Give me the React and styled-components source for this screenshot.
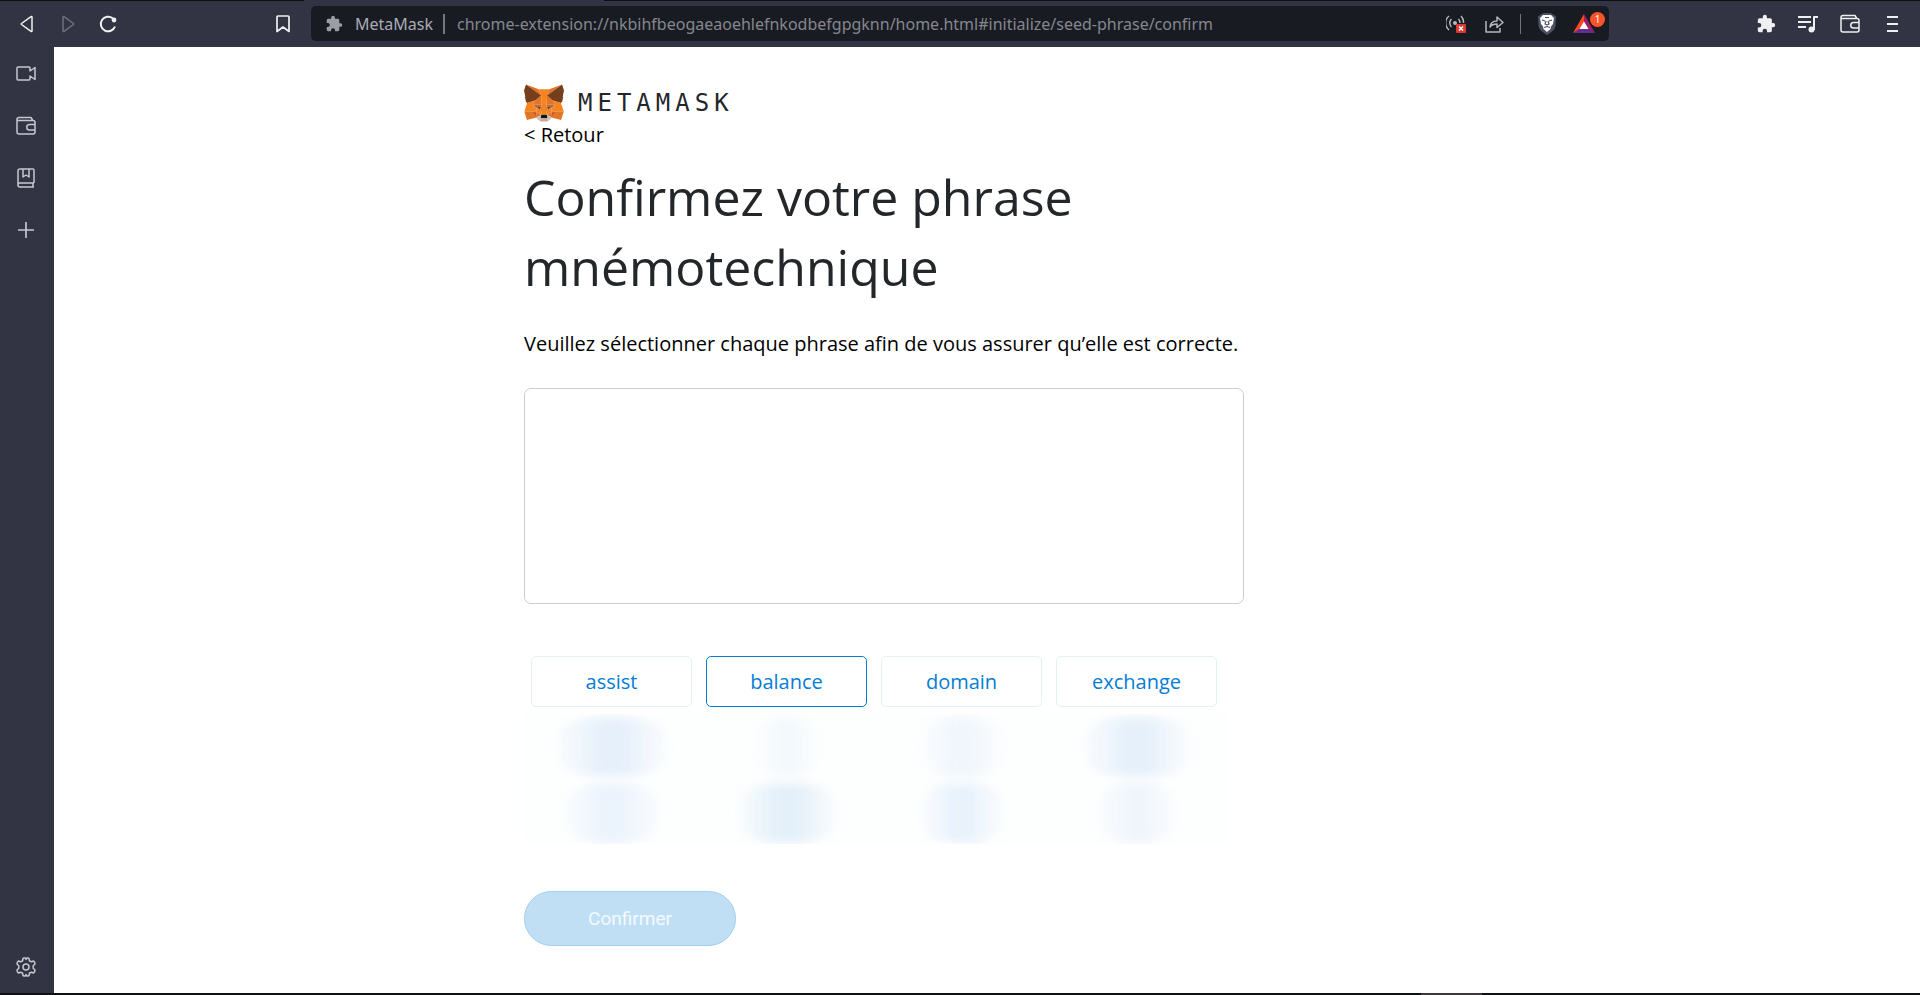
import React from 'react'
import styled, { createGlobalStyle } from 'styled-components'

const GlobalStyle = createGlobalStyle`
  * {
    box-sizing: border-box;
  }
  body {
    margin: 0;
    background: #ffffff;
  }
  button {
    font-family: inherit;
    cursor: pointer;
  }
`

const FOX_SHAPES = [
  ['#e17726', 'M33 1L19.8 10.7L22.3 5Z'],
  ['#e27625', 'M2.7 1L15.7 10.8L13.4 5ZM28.2 23.5L24.7 28.9L32.2 30.9L34.4 23.7ZM1.3 23.7L3.4 30.9L10.9 28.9L7.4 23.5ZM10.5 14.5L8.4 17.7L15.8 18L15.6 10ZM25.2 14.5L20 9.9L19.8 18L27.2 17.7ZM10.9 28.9L15.4 26.7L11.5 23.7ZM20.3 26.7L24.7 28.9L24.1 23.7Z'],
  ['#d5bfb2', 'M24.7 28.9L20.3 26.7L20.6 29.6L20.6 30.8ZM10.9 28.9L15 30.8L15 29.6L15.4 26.7Z'],
  ['#233447', 'M15.1 21.8L11.4 20.7L14 19.5ZM20.5 21.8L21.6 19.5L24.2 20.7Z'],
  ['#cc6228', 'M10.9 28.9L11.5 23.5L7.4 23.7ZM24.1 23.5L24.7 28.9L28.2 23.7ZM27.2 17.7L19.8 18L20.5 21.8L21.6 19.5L24.2 20.7ZM11.4 20.7L14 19.5L15.1 21.8L15.8 18L8.4 17.7Z'],
  ['#e27525', 'M8.4 17.7L11.5 23.7L11.4 20.7ZM24.2 20.7L24.1 23.7L27.2 17.7ZM15.8 18L15.1 21.8L16 26.3L16.2 20.4ZM19.8 18L19.5 20.4L19.6 26.3L20.5 21.8Z'],
  ['#f5841f', 'M20.5 21.8L19.6 26.3L20.3 26.7L24.1 23.7L24.2 20.7ZM11.4 20.7L11.5 23.7L15.4 26.7L16 26.3L15.1 21.8Z'],
  ['#c0ac9d', 'M20.6 30.8L20.6 29.6L20.3 29.3H15.3L15 29.6L15 30.8L10.9 28.9L12.3 30.1L15.3 32.1H20.3L23.3 30.1L24.7 28.9Z'],
  ['#161616', 'M20.3 26.7L19.6 26.3H16L15.4 26.7L15 29.6L15.3 29.3H20.3L20.6 29.6Z'],
  ['#763e1a', 'M33.5 11.4L34.6 6L33 1L20.3 10.4L25.2 14.5L32 16.5L33.6 14.7L32.9 14.3L34 13.3L33.2 12.7L34.2 11.9ZM1 6L2.1 11.4L1.4 11.9L2.5 12.7L1.7 13.3L2.7 14.3L2.1 14.7L3.6 16.5L10.5 14.5L15.4 10.4L2.7 1Z'],
  ['#f5841f', 'M32 16.5L25.2 14.5L27.2 17.7L24.1 23.7L28.2 23.7H34.4ZM10.5 14.5L3.6 16.5L1.3 23.7H7.4L11.5 23.7L8.4 17.7ZM19.8 18L20.3 10.4L22.3 5H13.4L15.4 10.4L15.8 18L16 20.4L16 26.3H19.6L19.7 20.4Z']
]

function Fox() {
  return (
    <svg width="40" height="38" viewBox="1 1 33.6 31.2" aria-hidden="true">
      {FOX_SHAPES.map(([fill, d]) => (
        <path key={d} fill={fill} d={d} />
      ))}
    </svg>
  )
}

const PUZZLE =
  'M20.5 11H19V7c0-1.100-.9-2-2-2h-4V3.500a2.500 2.500 0 0 0-5 0V5H4c-1.100 0-2 .9-2 2v3.800h1.500a2.700 2.700 0 0 1 0 5.400H2V20c0 1.100.9 2 2 2h3.800v-1.500a2.700 2.700 0 0 1 5.400 0V22H17c1.100 0 2-.9 2-2v-4h1.500a2.500 2.500 0 0 0 0-5z'

function Puzzle({ size }) {
  return (
    <svg width={size} height={size} viewBox="1 0 23 23" fill="currentColor" aria-hidden="true">
      <path d={PUZZLE} />
    </svg>
  )
}

function Line({ width = 20, height = 20, children }) {
  return (
    <svg
      width={width}
      height={height}
      viewBox={`0 0 ${width} ${height}`}
      fill="none"
      stroke="currentColor"
      strokeWidth="1.5"
      strokeLinejoin="round"
      aria-hidden="true"
    >
      {children}
    </svg>
  )
}

function Wallet() {
  return (
    <Line>
      <path d="M1 3.500C1 2 1.500 1.500 3 1.500h12l1.500 2.500M1 3.500c0 .5.500 1 1.500 1H17c1.300 0 2 .7 2 2V16c0 1.300-.7 2-2 2H3c-1.300 0-2-.7-2-2z" />
      <path d="M19 8.500h-5.500a2.700 2.700 0 0 0 0 5.500H19" />
    </Line>
  )
}

function Toolbar() {
  return (
    <ToolbarFrame>
      <NavGroup>
        <IconButton aria-label="Back">
          <Line>
            <path d="M14 3v14a.6.6 0 0 1-1 .4L3.500 10.500a.7.7 0 0 1 0-1L13 2.600a.6.6 0 0 1 1 .4z" />
          </Line>
        </IconButton>
        <IconButton aria-label="Forward" $dim>
          <Line>
            <path d="M5 3v14a.6.6 0 0 0 1 .4l9.500-6.900a.7.7 0 0 0 0-1L6 2.600a.6.6 0 0 0-1 .4z" />
          </Line>
        </IconButton>
        <IconButton aria-label="Reload">
          <Line>
            <path strokeWidth="2" d="M14.700 4.300A7.300 7.300 0 1 0 17 12.500" />
            <circle cx="16" cy="6" r="2.400" fill="currentColor" stroke="none" />
          </Line>
        </IconButton>
        <BookmarkButton aria-label="Bookmark">
          <Line>
            <path strokeWidth="1.700" d="M4 3c0-.6.400-1 1-1h10c.6 0 1 .4 1 1v14.500L10 13l-6 4.500z" />
          </Line>
        </BookmarkButton>
      </NavGroup>
      <AddressBar>
        <Puzzle size={17} />
        <SiteName>MetaMask</SiteName>
        <Url>chrome-extension://nkbihfbeogaeaoehlefnkodbefgpgknn/home.html#initialize/seed-phrase/confirm</Url>
        <BarIcons>
          <IconButton aria-label="Connections blocked" $muted>
            <Line>
              <circle cx="9" cy="9" r="2" fill="currentColor" stroke="none" />
              <path d="M5.500 13a5.500 5.500 0 0 1 0-8M12.500 5a5.500 5.500 0 0 1 1.500 4M3 16A9 9 0 0 1 3 2M15 2a9 9 0 0 1 2.500 7" />
              <rect x="10" y="10" width="10" height="9" rx="1" fill="#dc3a30" stroke="none" />
              <path stroke="#ffffff" d="M13 12.500l4 4m0-4l-4 4" />
            </Line>
          </IconButton>
          <IconButton aria-label="Share" $muted>
            <Line>
              <path d="M2 7v11h14v-4M6 13c.5-4 2.500-6 7-6V3l6 5.500-6 5V10c-3.500 0-5.500.8-7 3z" />
            </Line>
          </IconButton>
          <Divider />
          <IconButton aria-label="Brave Shields">
            <Line width={20} height={24}>
              <path fill="#4c5063" stroke="none" d="M4 2.500L6.500 1h7L16 2.500l3 2-.5 9.500c-.3 3-3 5.500-8.500 9-5.500-3.500-8.200-6-8.500-9L1 4.500z" />
              <path fill="#ffffff" stroke="none" d="M6 3h8l3 3-1 6-2 2.500-.5 2.500-3.500 3-3.500-3-.5-2.500L4 12 3 6z" />
              <path stroke="#4c5063" strokeWidth="1.200" d="M5 8l3 1M15 8l-3 1M9 9l-1 3 2 1 2-1-1-3M7 15.500l3-1 3 1M8 5.500h4" />
            </Line>
          </IconButton>
          <RewardsButton aria-label="Brave Rewards, 1 notification">
            <Line width={22} height={19}>
              <path fill="#ff4724" stroke="none" d="M11 0L0 19l11-6z" />
              <path fill="#9e1f63" stroke="none" d="M11 0l11 19-11-6z" />
              <path fill="#662d91" stroke="none" d="M0 19h22l-7-4.500H7z" />
              <path fill="#ffffff" stroke="none" d="M11 7.500l4.500 7.500h-9z" />
            </Line>
            <Badge>1</Badge>
          </RewardsButton>
        </BarIcons>
      </AddressBar>
      <ToolGroup>
        <IconButton aria-label="Extensions">
          <Puzzle size={19} />
        </IconButton>
        <IconButton aria-label="Media">
          <Line>
            <path strokeWidth="2" d="M0 3h13M0 8h13M0 13h8M16 16V3h4" />
            <circle cx="13.500" cy="15.500" r="3" fill="currentColor" stroke="none" />
          </Line>
        </IconButton>
        <IconButton aria-label="Wallet">
          <Wallet />
        </IconButton>
        <IconButton aria-label="Menu">
          <Line>
            <path strokeWidth="2" d="M5 3h11M5 10h11M5 17h11" />
          </Line>
        </IconButton>
      </ToolGroup>
    </ToolbarFrame>
  )
}

function Sidebar() {
  return (
    <SidebarFrame>
      <IconButton aria-label="Brave Talk" $soft>
        <Line>
          <path d="M1 4c0-.6.400-1 1-1h11c.6 0 1 .4 1 1v3l5-3.500v12L14 12v3c0 .6-.4 1-1 1H2c-.6 0-1-.4-1-1z" />
        </Line>
      </IconButton>
      <IconButton aria-label="Brave Wallet" $soft>
        <Wallet />
      </IconButton>
      <IconButton aria-label="Bookmarks" $soft>
        <Line>
          <path d="M18 15V2c0-.6-.4-1-1-1H4C2.500 1 2 1.500 2 3v14c0 1.300.7 2 2 2h14M18 15H4c-2.700 0-2.700 4 0 4M17 15v4M7 1v8l3-2 3 2V1" />
        </Line>
      </IconButton>
      <IconButton aria-label="Add to sidebar" $soft>
        <Line>
          <path strokeWidth="1.700" d="M10 2v16M2 10h16" />
        </Line>
      </IconButton>
      <SettingsButton aria-label="Settings" $soft>
        <Line>
          <path d="M8 1h1.300l.7 1.500L10.700 1H12l1 .5.500 2.500 2 .8L17.500 4l1 1 .5 2-1.800 1.700v2.600L19 13l-.5 2-1 1-2-.8-2 .8-.5 2.500-1 .5h-1.300L10 17.500 9.300 19H8l-1-.5L6.500 16l-2-.8-2 .8-1-1L1 13l1.800-1.700V8.700L1 7l.5-2 1-1 2 .8 2-.8L7 1.500z" />
          <circle cx="10" cy="10" r="3" />
        </Line>
      </SettingsButton>
    </SidebarFrame>
  )
}

const WORDS = ['assist', 'balance', 'domain', 'exchange']

const HIDDEN_WORDS = [
  { width: 116, color: '#e6f0fb' },
  { width: 66, color: '#f4f9fd' },
  { width: 84, color: '#f0f6fc' },
  { width: 112, color: '#e6f0fb' },
  { width: 100, color: '#ebf3fc' },
  { width: 104, color: '#e3f0fa' },
  { width: 86, color: '#e8f2fc' },
  { width: 80, color: '#eff5fb' }
]

export default function App() {
  return (
    <Browser>
      <GlobalStyle />
      <TabStrip>
        <ActiveTab />
      </TabStrip>
      <Toolbar />
      <Body>
        <Sidebar />
        <Page>
          <Content>
            <Logo>
              <Fox />
              <Wordmark>METAMASK</Wordmark>
            </Logo>
            <BackLink href="#initialize/seed-phrase">&lt; Retour</BackLink>
            <Title>Confirmez votre phrase mnémotechnique</Title>
            <Intro>Veuillez sélectionner chaque phrase afin de vous assurer qu’elle est correcte.</Intro>
            <Phrase aria-label="Phrase mnémotechnique" />
            <Words>
              {WORDS.map(word => (
                <Word key={word} $active={word === 'balance'}>
                  {word}
                </Word>
              ))}
            </Words>
            <HiddenWords aria-hidden="true">
              {HIDDEN_WORDS.map((word, i) => (
                <Smudge key={i} $width={word.width} $color={word.color} />
              ))}
            </HiddenWords>
            <Confirm disabled>Confirmer</Confirm>
          </Content>
        </Page>
      </Body>
      <Taskbar>
        <TaskbarItem />
      </Taskbar>
    </Browser>
  )
}

const Browser = styled.div`
  display: flex;
  flex-direction: column;
  min-height: 100vh;
  font-family: 'Open Sans', 'Liberation Sans', sans-serif;
`

const TabStrip = styled.div`
  height: 1px;
  padding-left: 304px;
  background: #0e0f14;
`

const ActiveTab = styled.div`
  width: 300px;
  height: 1px;
  background: #323443;
`

const ToolbarFrame = styled.header`
  display: flex;
  align-items: center;
  height: 46px;
  padding: 0 16px 1px;
  background: #323443;
`

const IconButton = styled.button`
  display: flex;
  align-items: center;
  justify-content: center;
  flex: none;
  width: 24px;
  height: 24px;
  padding: 0;
  border: 0;
  background: none;
  color: ${props => (props.$dim ? '#6f707b' : props.$muted ? '#b6b7ba' : props.$soft ? '#c5c6d0' : '#f0f0f2')};
`

const NavGroup = styled.nav`
  display: flex;
  gap: 16px;
  flex: 1 1 0;
`

const BookmarkButton = styled(IconButton)`
  margin: 0 16px 0 auto;
`

const AddressBar = styled.div`
  display: flex;
  align-items: center;
  width: 68.75%;
  height: 35px;
  padding: 0 4px 0 15px;
  border-radius: 5px;
  background: #191b22;
  color: #9b9da7;
  font-family: 'Noto Sans', sans-serif;
  font-size: 16px;
  white-space: nowrap;
`

const SiteName = styled.span`
  margin-left: 12px;
  padding-right: 10px;
  border-right: 2px solid #74767f;
  color: #a9abb5;
  line-height: 20px;
`

const Url = styled.span`
  flex: 1;
  min-width: 0;
  margin-left: 12px;
  overflow: hidden;
  color: #85878f;
`

const BarIcons = styled.div`
  display: flex;
  align-items: center;
  gap: 14px;
`

const Divider = styled.span`
  width: 1px;
  height: 20px;
  background: #74767f;
`

const RewardsButton = styled(IconButton)`
  position: relative;
  justify-content: flex-start;
  width: 32px;
`

const Badge = styled.span`
  position: absolute;
  top: 0;
  right: 0;
  width: 15px;
  height: 15px;
  border-radius: 50%;
  background: #fb542b;
  color: #ffffff;
  font-size: 10px;
  line-height: 15px;
`

const ToolGroup = styled.div`
  display: flex;
  justify-content: flex-end;
  gap: 18px;
  flex: 1 1 0;
`

const Body = styled.div`
  display: flex;
  flex: 1;
`

const SidebarFrame = styled.aside`
  display: flex;
  flex-direction: column;
  align-items: center;
  gap: 28px;
  width: 54px;
  padding: 15px 2px 14px 0;
  background: #323443;
`

const SettingsButton = styled(IconButton)`
  margin-top: auto;
`

const Page = styled.main`
  flex: 1;
  padding: 37px 24px;
`

const Content = styled.div`
  max-width: 926px;
  margin: 0 auto;
  color: #24272a;
`

const Logo = styled.div`
  display: flex;
  align-items: center;
  gap: 14px;
`

const Wordmark = styled.span`
  font-family: 'DejaVu Sans Mono', monospace;
  font-size: 24px;
  letter-spacing: 5px;
`

const BackLink = styled.a`
  display: block;
  color: #000000;
  font-size: 20px;
  line-height: 26px;
  text-decoration: none;
`

const Title = styled.h1`
  margin: 14px 0 28px;
  font-size: 50px;
  font-weight: 400;
  line-height: 70px;
`

const Intro = styled.p`
  margin: 0 0 30px;
  color: #000000;
  font-size: 20px;
  line-height: 28px;
`

const Phrase = styled.section`
  max-width: 720px;
  height: 216px;
  margin-bottom: 52px;
  border: 1px solid #cdcdcd;
  border-radius: 7px;
`

const Words = styled.div`
  display: grid;
  grid-template-columns: repeat(4, 161px);
  gap: 14px;
  padding: 0 7px;
`

const Word = styled.button`
  height: 51px;
  border: 1px solid ${props => (props.$active ? '#037dd6' : '#e1f0fb')};
  border-radius: 5px;
  background: #ffffff;
  color: #037dd6;
  font-size: 20px;
`

const HiddenWords = styled.div`
  display: grid;
  grid-template-columns: repeat(4, 175px);
  grid-template-rows: 66px 64px;
  width: 704px;
  margin: 7px 0 47px;
  overflow: hidden;
  background: #fdfefe;
`

const Smudge = styled.span`
  justify-self: center;
  width: ${props => props.$width}px;
  height: 58px;
  margin-top: 4px;
  border-radius: 40%;
  background: linear-gradient(90deg, transparent, ${props => props.$color} 40% 60%, transparent);
  filter: blur(4px);
`

const Confirm = styled.button`
  width: 212px;
  height: 55px;
  border: 1px solid #a0cff0;
  border-radius: 28px;
  background: #c0dff5;
  color: #f4faff;
  font-family: Roboto, sans-serif;
  font-size: 19px;
`

const Taskbar = styled.footer`
  display: flex;
  height: 2px;
  padding-left: 74%;
  background: #101113;
`

const TaskbarItem = styled.span`
  width: 61px;
  background: #3a3838;
`
